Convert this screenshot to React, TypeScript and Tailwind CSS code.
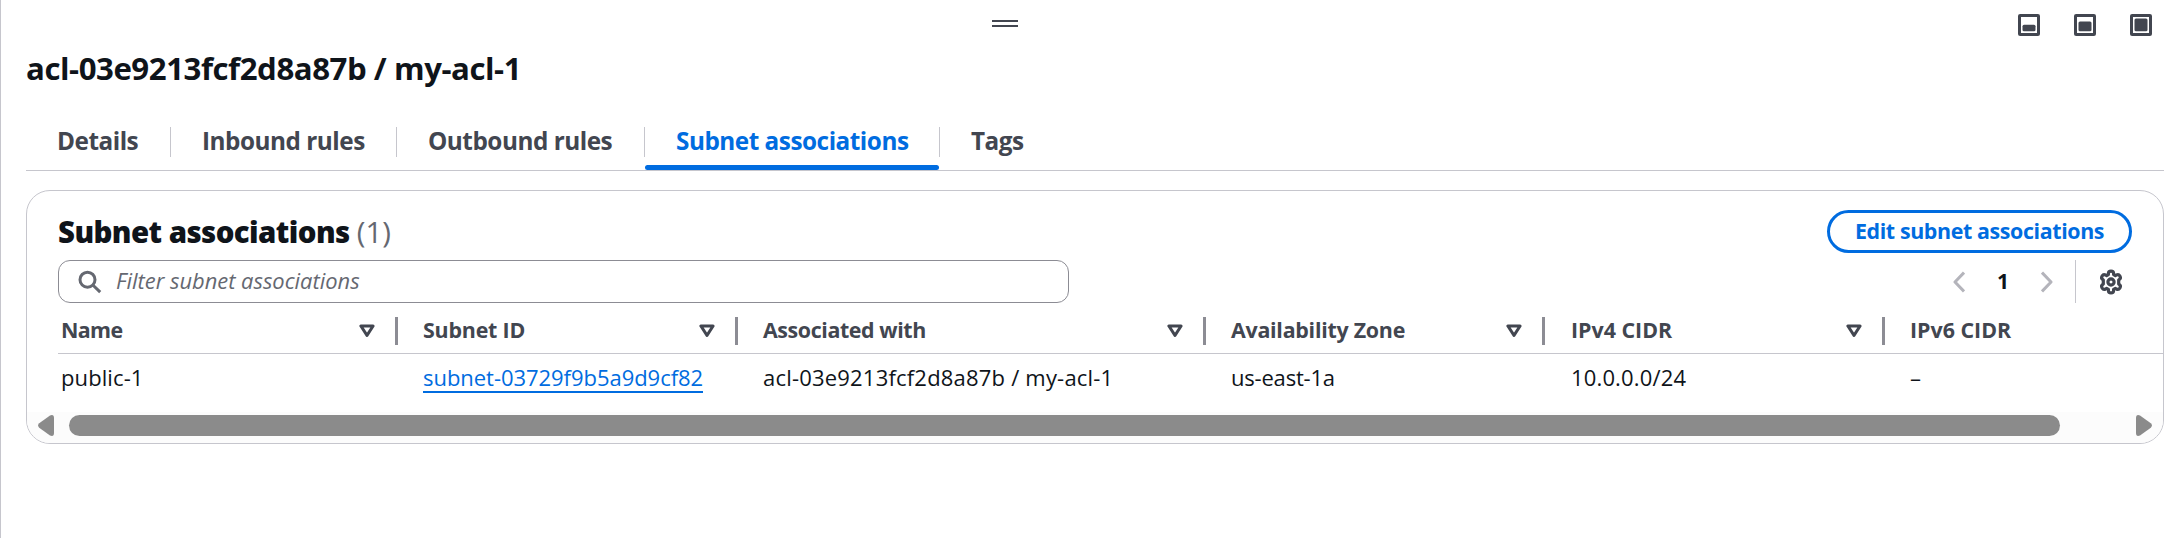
import type { ReactNode } from "react";

const TABS = [
  { label: "Details", active: false, width: "w-[145px]" },
  { label: "Inbound rules", active: false, width: "w-[226px]" },
  { label: "Outbound rules", active: false, width: "w-[248px]" },
  { label: "Subnet associations", active: true, width: "w-[295px]" },
  { label: "Tags", active: false, width: "w-[116px]" },
];

type Column = {
  title: string;
  value: ReactNode;
  width: string;
  pad: string;
  head: string;
  cell: string;
  sortable: boolean;
};

const COLUMNS: Column[] = [
  {
    title: "Name",
    value: "public-1",
    width: "w-[340px]",
    pad: "pl-[3px]",
    head: "tracking-[-0.6px]",
    cell: "tracking-[0.1px]",
    sortable: true,
  },
  {
    title: "Subnet ID",
    value: (
      <a href="#" className="flex h-[27px] items-start border-b-2 border-[#006ce0] text-[#006ce0]">
        subnet-03729f9b5a9d9cf82
      </a>
    ),
    width: "w-[340px]",
    pad: "pl-[25px]",
    head: "tracking-[-0.2px]",
    cell: "tracking-[-0.04px]",
    sortable: true,
  },
  {
    title: "Associated with",
    value: "acl-03e9213fcf2d8a87b / my-acl-1",
    width: "w-[468px]",
    pad: "pl-[25px]",
    head: "tracking-[-0.4px]",
    cell: "tracking-[0.2px]",
    sortable: true,
  },
  {
    title: "Availability Zone",
    value: "us-east-1a",
    width: "w-[339px]",
    pad: "pl-[25px]",
    head: "tracking-[-0.25px]",
    cell: "tracking-[-0.2px]",
    sortable: true,
  },
  {
    title: "IPv4 CIDR",
    value: "10.0.0.0/24",
    width: "w-[340px]",
    pad: "pl-[26px]",
    head: "tracking-[0px]",
    cell: "tracking-[0.15px]",
    sortable: true,
  },
  {
    title: "IPv6 CIDR",
    value: "–",
    width: "w-[278px]",
    pad: "pl-[25px]",
    head: "tracking-[0px]",
    cell: "tracking-[0px]",
    sortable: false,
  },
];

function PanelIcon({ top }: { top: number }) {
  return (
    <svg width="22" height="22" viewBox="0 0 22 22">
      <rect x="1.5" y="1.5" width="19" height="19" rx="0.6" fill="none" stroke="#424650" strokeWidth="3" />
      <rect x="4.5" y={top} width="13" height={17.2 - top} rx="1.5" fill="#424650" />
    </svg>
  );
}

function SearchIcon() {
  return (
    <svg width="24" height="24" viewBox="0 0 24 24" fill="none" stroke="#656871" strokeWidth="3">
      <circle cx="9.5" cy="9.7" r="7.5" />
      <path d="M14.8 15 L22.2 22.1" />
    </svg>
  );
}

function Chevron({ flip }: { flip?: boolean }) {
  return (
    <svg
      width="12"
      height="22"
      viewBox="0 0 12 22"
      fill="none"
      stroke="#b4b4bb"
      strokeWidth="3"
      className={flip ? "-scale-x-100" : ""}
    >
      <path d="M11 1.6 L2 11 L11 20.4" strokeLinejoin="round" />
    </svg>
  );
}

function GearIcon() {
  return (
    <svg width="26" height="26" viewBox="0 0 26 26" fill="none" stroke="#424650" strokeWidth="3.2" strokeLinejoin="round">
      <path d="M10.4 4.6 Q10.4 2.1 13 2.1 Q15.6 2.1 15.6 4.6 L15.6 5.6 L17.4 6.6 L18.4 6 Q20.6 4.8 21.9 7 Q23.2 9.3 21.2 10.6 L20.7 11 L20.7 15 L21.2 15.4 Q23.2 16.7 21.9 19 Q20.6 21.2 18.4 20 L17.4 19.4 L15.6 20.4 L15.6 21.4 Q15.6 23.9 13 23.9 Q10.4 23.9 10.4 21.4 L10.4 20.4 L8.6 19.4 L7.6 20 Q5.4 21.2 4.1 19 Q2.8 16.7 4.8 15.4 L5.3 15 L5.3 11 L4.8 10.6 Q2.8 9.3 4.1 7 Q5.4 4.8 7.6 6 L8.6 6.6 L10.4 5.6 Z" />
      <circle cx="13" cy="13" r="3.1" />
    </svg>
  );
}

function SortIcon() {
  return (
    <svg width="16" height="14" viewBox="0 0 16 14" fill="none" stroke="#424650" strokeWidth="3" strokeLinejoin="round">
      <path d="M1.9 2 H14.1 L8 11.4 Z" />
    </svg>
  );
}

function ScrollArrow({ flip }: { flip?: boolean }) {
  return (
    <svg width="16" height="21" viewBox="0 0 16 21" className={flip ? "-scale-x-100" : ""}>
      <path d="M1.2 8.3 L12 .5 Q16 -1 16 3 V18 Q16 22 12 20.5 L1.2 12.7 Q-1 10.5 1.2 8.3 Z" fill="#8b8b8b" />
    </svg>
  );
}

export default function App() {
  return (
    <div className="flex h-[538px] w-full flex-col overflow-hidden border-l border-[#c6c6cd] bg-white pr-[20px] pl-[25px] font-['Open_Sans','Noto_Sans',sans-serif] whitespace-nowrap text-[#0f141a]">
      <div className="flex h-[49px] shrink-0 items-start">
        <div className="flex flex-1 flex-col gap-[3px] pt-[20px] pl-[966px]">
          <span className="h-[2px] w-[26px] bg-[#424650]" />
          <span className="h-[2px] w-[26px] bg-[#424650]" />
        </div>
        <div className="flex gap-[34px] pt-[14px] pr-[12px]">
          <PanelIcon top={10.8} />
          <PanelIcon top={7.6} />
          <PanelIcon top={4.6} />
        </div>
      </div>

      <h1 className="h-[78px] shrink-0 text-[31.2px] leading-[39px] font-bold tracking-[-0.45px]">
        acl-03e9213fcf2d8a87b / my-acl-1
      </h1>

      <div className="flex h-[44px] shrink-0 border-b border-[#c6c6cd]">
        {TABS.map((tab, i) => (
          <div key={tab.label} className={`flex flex-col ${tab.width}`}>
            <div
              className={`flex h-[30px] items-center pb-[1px] text-[24.3px] font-bold tracking-[-0.47px] ${
                i < TABS.length - 1 ? "border-r border-[#c6c6cd]" : ""
              } pl-[31px] ${tab.active ? "text-[#006ce0]" : "text-[#424650]"}`}
            >
              {tab.label}
            </div>
            {tab.active && <div className="mt-[8px] h-[5px] w-[294px] rounded-[3px] bg-[#006ce0]" />}
          </div>
        ))}
      </div>

      <section className="mt-[19px] flex h-[254px] shrink-0 flex-col overflow-hidden rounded-[24px] border border-[#c6c6cd]">
        <div className="flex items-center justify-between pt-[19px] pr-[31px] pl-[31px]">
          <h2 className="pt-[1px] text-[29.4px] leading-[42px] font-extrabold tracking-[-0.56px]">
            Subnet associations <span className="font-normal tracking-normal text-[#656871]">(1)</span>
          </h2>
          <button className="flex h-[43px] w-[305px] items-center justify-center rounded-full border-[3px] border-[#006ce0] text-[21.4px] font-bold tracking-[-0.38px] text-[#006ce0]">
            Edit subnet associations
          </button>
        </div>

        <div className="mt-[7px] flex justify-between pr-[39px] pl-[31px]">
          <div className="flex h-[43px] w-[1011px] items-center rounded-[12px] border border-[#8c8c94] pl-[19px]">
            <SearchIcon />
            <span className="ml-[14px] text-[21.9px] text-[#656871] italic">Filter subnet associations</span>
          </div>
          <div className="flex items-center">
            <Chevron />
            <span className="w-[76px] text-center text-[21px] font-bold">1</span>
            <Chevron flip />
            <span className="ml-[22px] h-[43px] w-px bg-[#c6c6cd]" />
            <span className="ml-[22px]">
              <GearIcon />
            </span>
          </div>
        </div>

        <div className="ml-[31px] flex h-[51px] items-start border-b border-[#c6c6cd] pt-[14px]">
          {COLUMNS.map((c) => (
            <div
              key={c.title}
              className={`flex h-[28px] shrink-0 items-center justify-between text-[21.4px] font-bold text-[#424650] ${c.width} ${c.pad} ${c.head} ${
                c.sortable ? "border-r-[3px] border-[#8c8c94] pr-[20px]" : ""
              }`}
            >
              <span className="pb-[1px]">{c.title}</span>
              {c.sortable && <SortIcon />}
            </div>
          ))}
        </div>

        <div className="ml-[31px] flex h-[58px] shrink-0 items-start pt-[12px]">
          {COLUMNS.map((c) => (
            <div
              key={c.title}
              className={`flex h-[24px] shrink-0 items-start text-[22px] leading-[23px] ${c.width} ${c.pad} ${c.cell}`}
            >
              {c.value}
            </div>
          ))}
        </div>

        <div className="flex flex-1 items-start bg-[#fcfcfc] pt-[3px] pr-[11px] pl-[11px]">
          <ScrollArrow />
          <span className="ml-[15px] h-[21px] w-[1991px] rounded-full bg-[#8b8b8b]" />
          <span className="ml-auto">
            <ScrollArrow flip />
          </span>
        </div>
      </section>
    </div>
  );
}
